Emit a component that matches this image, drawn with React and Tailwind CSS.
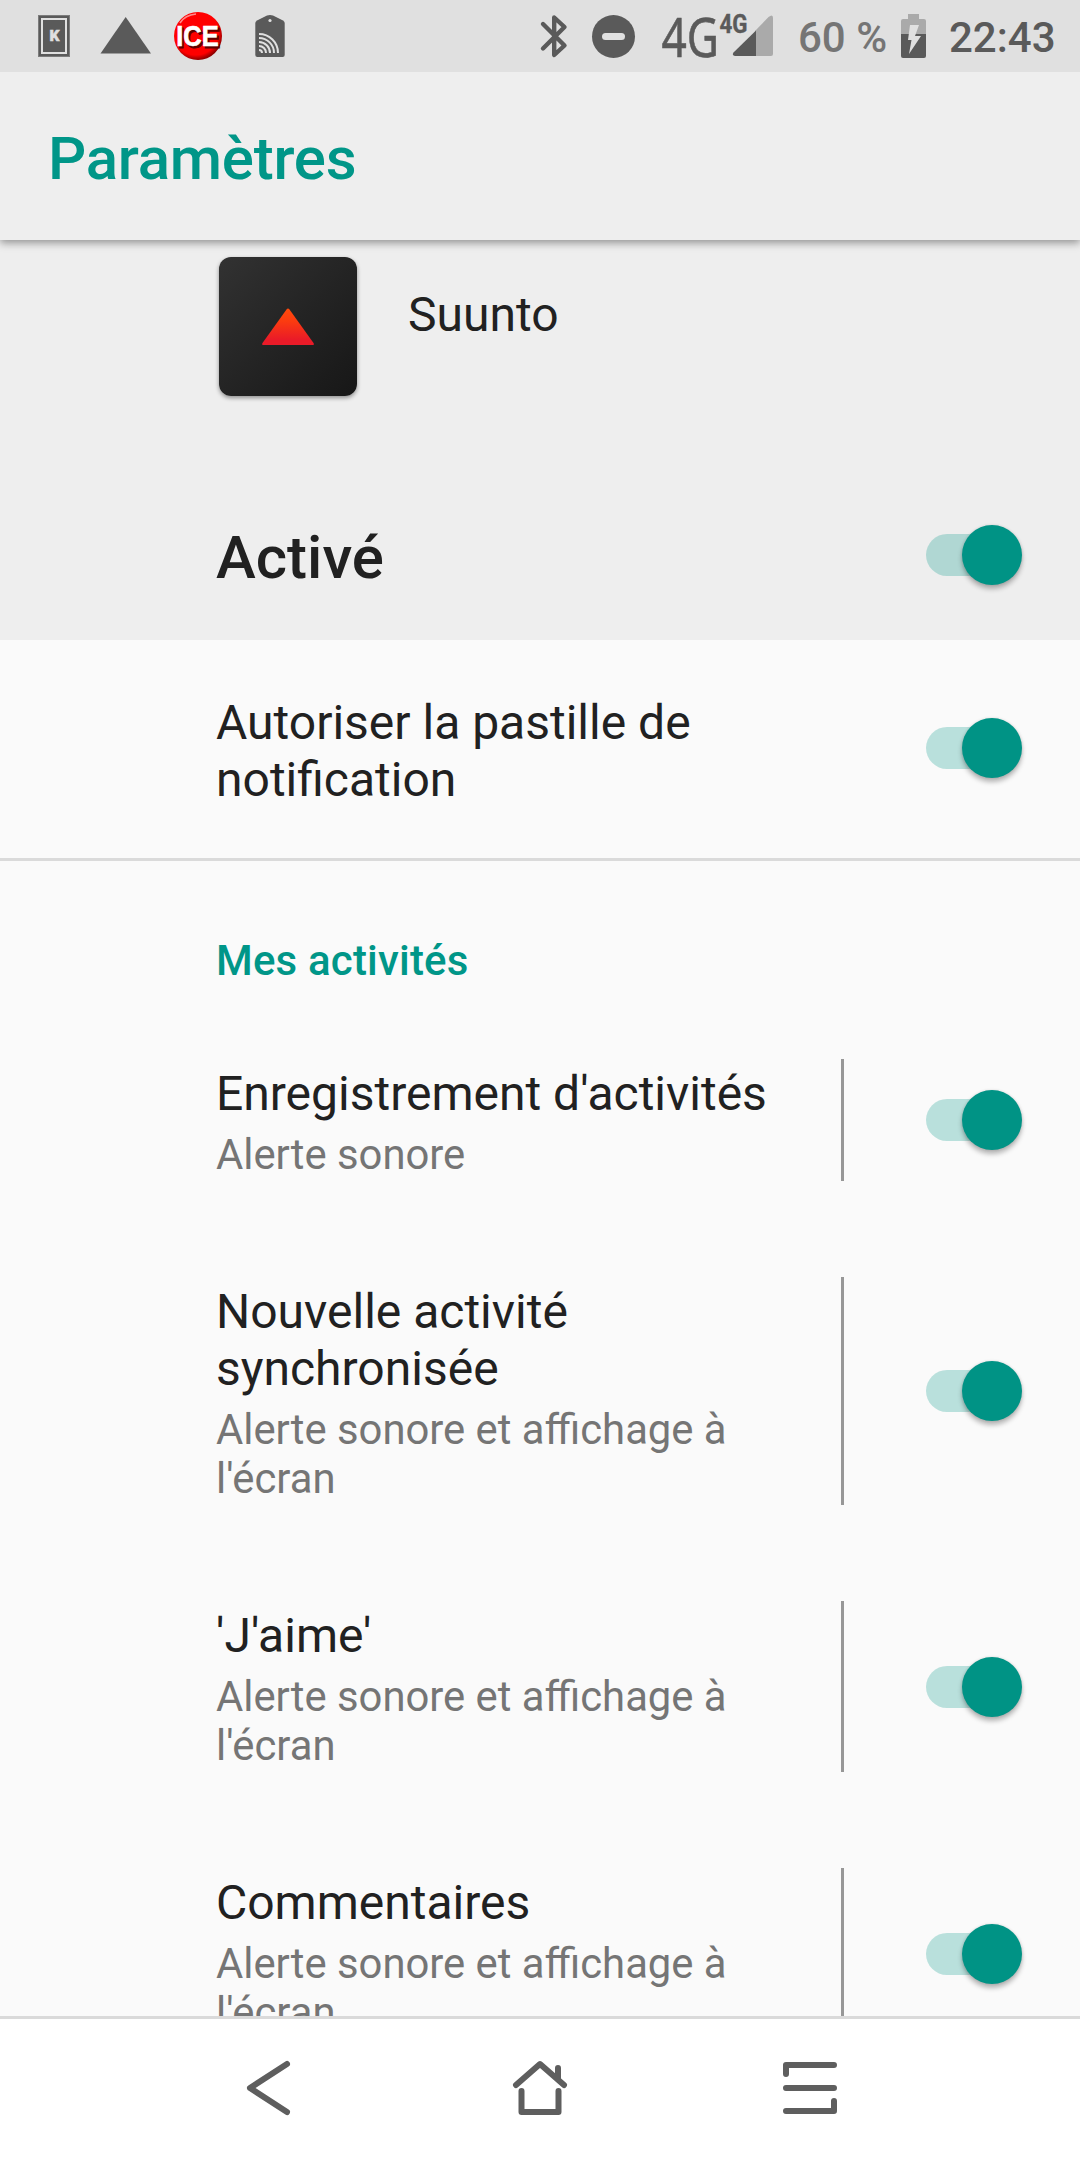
import clsx from 'clsx'

const channels = [
	{ title: "Enregistrement d'activités", summary: 'Alerte sonore' },
	{ title: 'Nouvelle activité synchronisée', summary: "Alerte sonore et affichage à l'écran" },
	{ title: "'J'aime'", summary: "Alerte sonore et affichage à l'écran" },
	{ title: 'Commentaires', summary: "Alerte sonore et affichage à l'écran" },
]


const Toggle = ({ className }) => (
	<div className={clsx('relative w-24 h-[42px] shrink-0', className)}>
		<div className='w-[90px] h-full rounded-full bg-[#009688]/26'></div>
		<div className='absolute right-[0.4px] -top-[8.6px] size-[60px] rounded-full bg-[#009385] shadow-[0_4px_5px_rgba(0,0,0,0.28),0_0_3px_rgba(0,0,0,0.12)]'></div>
	</div>
)


const StatusBar = () => (
	<div className='relative z-20 flex h-[72px] shrink-0 bg-[#e0e0e0] text-[#5a5a5a]'>

		<svg className='ml-[38px] w-8 h-[72px]' viewBox='0 0 32 72'>
			<rect x='0.5' y='15.5' width='31' height='41' fill='#5a5a5a' stroke='#7c7c7c' />
			<rect x='4' y='19' width='24' height='34' fill='none' stroke='#e0e0e0' strokeWidth='2' />
			<text x='16.5' y='41' textAnchor='middle' fill='#e0e0e0' stroke='#e0e0e0' strokeWidth='0.5' className='font-[Roboto] font-black text-[15.5px]'>K</text>
		</svg>

		<svg className='ml-[30px] w-[52px] h-[72px]' viewBox='0 0 52 72'>
			<path d='M25.7 17L51 53.5H0.5z' fill='#5a5a5a' />
		</svg>

		<svg className='ml-[21px] w-[50px] h-[72px]' viewBox='0 0 50 72'>
			<defs>
				<radialGradient id='ice' cx='0.45' cy='0.42' r='0.58'>
					<stop offset='0.82' stopColor='#ff0000' />
					<stop offset='1' stopColor='#8c0000' />
				</radialGradient>
			</defs>
			<circle cx='25' cy='36' r='24' fill='url(#ice)' />
			<path d='M7 23Q12 15 23 14' fill='none' stroke='#ff8a8a' strokeWidth='1.5' />
			<g fontFamily='Liberation Sans' fontWeight='bold' fontSize='29.500'>
				<text x='4.500' y='47.5' textLength='43' lengthAdjust='spacingAndGlyphs' fill='#5e0000' stroke='#5e0000'>ICE</text>
				<text x='3.200' y='46' textLength='42.500' lengthAdjust='spacingAndGlyphs' fill='#ffffff' stroke='#ffffff' strokeWidth='0.6'>ICE</text>
			</g>
		</svg>

		<svg className='ml-8 w-[30px] h-[72px]' viewBox='0 0 30 72' fill='none' stroke='#e0e0e0' strokeWidth='2'>
			<path d='M12 15.5Q15 14.5 18 15.5L28 20.5Q29.7 21.5 29.7 23V55Q29.7 57 27.7 57H2.3Q0.3 57 0.3 55V23Q0.3 21.5 2 20.5z' fill='#5a5a5a' stroke='none' />
			<circle cx='15' cy='20.5' r='1.6' fill='#e0e0e0' stroke='none' />
			<path d='M4 34A19 19 0 0 1 23 53M4 38A15 15 0 0 1 19 53M4 42A11 11 0 0 1 15 53M4 46A7 7 0 0 1 11 53M4 50A3 3 0 0 1 7 53' />
		</svg>

		<svg className='ml-[254px] w-[30px] h-[72px]' viewBox='0 0 30 72'>
			<path d='M4 24L25.5 45.5L15.2 55V17.5L25.5 27L4 48.5' fill='none' stroke='#5a5a5a' strokeWidth='4.4' strokeLinecap='round' strokeLinejoin='round' />
		</svg>

		<svg className='ml-[22px] w-[46px] h-[72px]' viewBox='0 0 46 72'>
			<circle cx='22.5' cy='36.5' r='21.5' fill='#5a5a5a' />
			<rect x='11' y='33' width='23' height='7' rx='3.5' fill='#e0e0e0' />
		</svg>

		<svg className='ml-6 w-[114px] h-[72px] overflow-visible' viewBox='0 0 114 72'>
			<text x='0.5' y='57' textLength='57.500' lengthAdjust='spacingAndGlyphs' fill='#5a5a5a' stroke='#5a5a5a' strokeWidth='0.6' className='font-["Noto_Sans"] text-[55px]'>4G</text>
			<text x='58.500' y='32.500' textLength='28' lengthAdjust='spacingAndGlyphs' fill='#5a5a5a' stroke='#5a5a5a' strokeWidth='0.4' className='font-[Roboto] font-bold text-[26px]'>4G</text>
			<path d='M94.5 30.5L107.5 17Q112 13.5 112 18V54Q112 56 110 56H94.5z' fill='#aaaaaa' />
			<path d='M95 30.5V56H74Q70.500 55 72.500 52.500z' fill='#5a5a5a' />
		</svg>

		<span className='ml-[23px] w-[90px] leading-[76px] whitespace-nowrap font-medium text-[42px] text-[#757575]'>60 %</span>

		<svg className='ml-[13px] w-[25px] h-[72px]' viewBox='0 0 25 72'>
			<path d='M0 34.500V21Q0 19 2 19H7V14H18V19H23Q25 19 25 21V34.500z' fill='#aaaaaa' />
			<path d='M0 34V56Q0 58 2 58H23Q25 58 25 56V34z' fill='#5a5a5a' />
			<path d='M9 25H18L14 36H20L8 54L10.500 40H7z' fill='#e0e0e0' />
		</svg>

		<span className='ml-[23px] leading-[76px] font-medium text-[42px]'>22:43</span>
	</div>
)


const ChannelRow = ({ title, summary }) => (
	<div className='flex shrink-0 items-stretch pl-[216px] pr-[58px] mb-24'>
		<div className='w-[580px] pt-[6px] pb-[2px]'>
			<p className='text-5xl leading-[57px] text-[#212121]'>{title}</p>
			<p className='mt-2 text-[41.8px] leading-[49px] text-[#757575]'>{summary}</p>
		</div>
		<div className='ml-[45px] w-[3px] bg-[#979797]'></div>
		<Toggle className='ml-auto self-center' />
	</div>
)


const NavBar = () => (
	<div className='flex h-[144px] shrink-0 border-t-3 border-[#dadada] bg-white'>
		<svg className='w-full h-[141px]' viewBox='0 0 1080 141' fill='none' stroke='#5e5e5e' strokeWidth='6' strokeLinecap='round' strokeLinejoin='round'>
			<path d='M287 45L250 69L287 93' />
			<path d='M516 66L540 45L564 66M558 49V60M521.500 72V93H558.500V72' />
			<path d='M786 55V46H834M786 69H834M786 92H834V82' />
		</svg>
	</div>
)


const App = () => {

	return (
		<div className='flex flex-col w-[1080px] h-[2160px] overflow-hidden bg-[#fafafa] font-[Roboto,sans-serif]'>

			<StatusBar />

			<header className='relative z-10 flex h-[168px] shrink-0 items-center bg-[#eeeeee] pt-[5px] pl-12 shadow-[0_3px_8px_rgba(0,0,0,0.38)]'>
				<h1 className='text-[60px] leading-[70px] font-medium tracking-[-0.25px] text-[#009688]'>Paramètres</h1>
			</header>

			<main className='flex min-h-0 grow flex-col overflow-hidden'>

				<section className='h-[400px] shrink-0 bg-[#eeeeee] pt-[17px] pl-[216px] pr-[58px]'>
					<div className='flex'>
						<div className='ml-[3px] flex h-[139px] w-[138px] items-center justify-center rounded-xl bg-linear-to-br from-[#323232] to-[#171717] shadow-[0_2px_4px_rgba(0,0,0,0.4)]'>
							<svg className='w-[52px] h-[37px]' viewBox='0 0 52 37'>
								<defs>
									<linearGradient id='peak' x1='0' y1='0' x2='0' y2='1'>
										<stop offset='0' stopColor='#ff4a0c' />
										<stop offset='0.35' stopColor='#fb3b10' />
										<stop offset='0.85' stopColor='#ea1b28' />
									</linearGradient>
								</defs>
								<path d='M24.500 1.500Q26 -0.500 27.500 1.500L51.500 35Q52.500 37 51 37H1Q-0.500 37 0.500 35z' fill='url(#peak)' />
							</svg>
						</div>
						<p className='mt-[29px] ml-[51px] text-5xl leading-[57px] text-[#212121]'>Suunto</p>
					</div>
					<div className='mt-[127px] flex items-start justify-between'>
						<p className='text-[60px] leading-[70px] font-medium text-[#212121]'>Activé</p>
						<Toggle className='mt-[11px]' />
					</div>
				</section>

				<section className='flex h-[221px] shrink-0 items-start justify-between border-b-3 border-[#dadada] pt-[54px] pl-[216px] pr-[58px]'>
					<p className='w-[560px] text-5xl leading-[57px] text-[#212121]'>Autoriser la pastille de notification</p>
					<Toggle className='mt-[33px]' />
				</section>

				<h2 className='mt-[75px] mb-[74px] shrink-0 pl-[216px] text-[42px] leading-[49px] font-medium tracking-[0.18px] text-[#009688]'>Mes activités</h2>

				{channels.map((channel) => (
					<ChannelRow key={channel.title} {...channel} />
				))}

			</main>

			<NavBar />

		</div>
	)
}

export default App
